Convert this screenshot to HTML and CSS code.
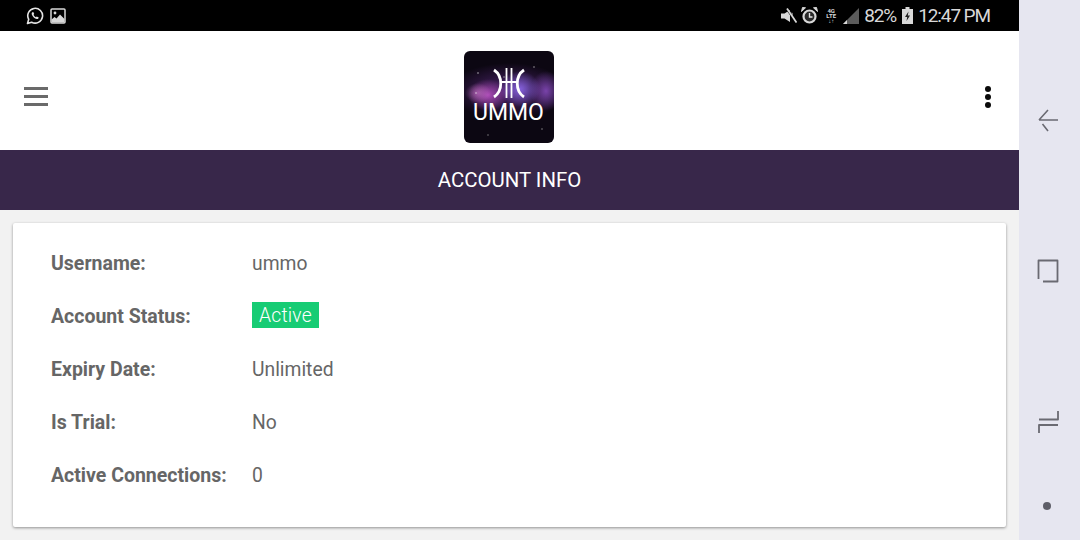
FILE: index.html
```html
<!DOCTYPE html>
<html lang="en">
<head>
	<meta charset="UTF-8">
	<title>Account Info</title>
	<link rel="stylesheet" href="styles.css">
</head>
<body>
	<div class="screen">
		<div class="app">
			<div class="statusBar">
				<div class="statusLeft">
					<svg class="icon" width="18" height="18" viewBox="0 0 18 18" fill="none" stroke="#e4e4e4">
						<path d="M1.5 16.5l1.2-4.2A7.4 7.4 0 1 1 5.6 15.2z" stroke-width="1.6" stroke-linejoin="round"/>
						<path d="M6.3 5.2c-1 .9-.8 2.4.5 4.1 1.4 1.8 3 2.9 4.4 2.7.9-.1 1.5-.8 1.5-1.6l-2-1-.8.8c-1-.4-1.9-1.3-2.4-2.4l.7-.8-.9-2z" fill="#e4e4e4" stroke="none"/>
					</svg>
					<svg class="icon" width="16" height="16" viewBox="0 0 16 16">
						<rect x="1" y="1" width="14" height="14" rx="1" fill="none" stroke="#d8d8d8" stroke-width="1.5"/>
						<circle cx="5" cy="5" r="1.4" fill="#d8d8d8"/>
						<path d="M1.5 14.5v-3l3-2.5 2 1.5 3.5-4 4.500 4.500v3.500z" fill="#d8d8d8"/>
					</svg>
				</div>
				<div class="statusRight">
					<svg class="icon" width="16" height="18" viewBox="0 0 16 18" fill="#d8d8d8">
						<path d="M0 6.500h3.500L9 3v12l-5.500-3.500H0z"/>
						<path d="M7 2l9 13v1h-1.500L6 4z" fill="#000"/>
						<path d="M6 1.500L15.500 15.500" stroke="#d8d8d8" stroke-width="1.800"/>
						<path d="M10.500 5.500L11.500 6v4z"/>
					</svg>
					<svg class="icon alarm" width="17" height="17" viewBox="0 0 17 17">
						<circle cx="8.500" cy="9.500" r="6" fill="#2a2a2a" stroke="#d8d8d8" stroke-width="2.200"/>
						<path d="M8.500 6v4h3" fill="none" stroke="#e4e4e4" stroke-width="1.400"/>
						<path d="M.5 4.500L4.500.8 1.500.5zM16.500 4.500L12.500.8l3-.3z" fill="#d8d8d8" stroke="#d8d8d8"/>
					</svg>
					<div class="netType">
						<span>4G</span>
						<span>LTE</span>
						<span>↓↑</span>
					</div>
					<svg class="icon signal" width="16" height="16" viewBox="0 0 16 16">
						<path d="M0 16L16 0v16z" fill="#5c5c5c"/>
						<path d="M0 16l4-4v4z" fill="#d8d8d8"/>
					</svg>
					<span class="statusText percent">82%</span>
					<svg class="icon battery" width="11" height="17" viewBox="0 0 11 17">
						<path d="M3.500 0h4v2H11v15H0V2h3.500z" fill="#d8d8d8"/>
						<path d="M6.500 4.500L3 10h2.200l-.7 4L8 8.500H5.800z" fill="#222"/>
					</svg>
					<span class="statusText clock">12:47 PM</span>
				</div>
			</div>

			<div class="header">
				<div class="hamburger">
					<span></span>
					<span></span>
					<span></span>
				</div>
				<div class="logo">
					<svg class="logoMark" width="36" height="32" viewBox="0 0 36 32" fill="none" stroke="#fff" stroke-width="2.800">
						<path d="M3 3c9 6 9 21 0 27"/>
						<path d="M33 3c-9 6-9 21 0 27"/>
						<path d="M15.500 1v30M20.500 1v30M10 15h16" stroke-width="1.800"/>
					</svg>
					<span class="logoText">UMMO</span>
				</div>
				<div class="dots">
					<span></span>
					<span></span>
					<span></span>
				</div>
			</div>

			<div class="titleBar">ACCOUNT INFO</div>

			<div class="content">
				<div class="card">
					<div class="row">
						<div class="label">Username:</div>
						<div class="value">ummo</div>
					</div>
					<div class="row">
						<div class="label">Account Status:</div>
						<div class="value"><span class="badge">Active</span></div>
					</div>
					<div class="row">
						<div class="label">Expiry Date:</div>
						<div class="value">Unlimited</div>
					</div>
					<div class="row">
						<div class="label">Is Trial:</div>
						<div class="value">No</div>
					</div>
					<div class="row">
						<div class="label">Active Connections:</div>
						<div class="value">0</div>
					</div>
				</div>
			</div>
		</div>

		<div class="navBar">
			<svg width="24" height="26" viewBox="0 0 24 26" fill="none" stroke="#6a6a72" stroke-width="1.600">
				<path d="M22 13H3M12 3l-9 10M6.500 17l5.500 7"/>
			</svg>
			<svg width="22" height="24" viewBox="0 0 22 24" fill="none" stroke="#6a6a72" stroke-width="1.800" stroke-linejoin="round">
				<path d="M1.500 20V1.500h19v21H6"/>
			</svg>
			<svg width="22" height="24" viewBox="0 0 22 24" fill="none" stroke="#6a6a72" stroke-width="1.800" stroke-linejoin="round">
				<path d="M21 1v8.500H2M2 23v-8h19"/>
			</svg>
			<span class="navDot"></span>
		</div>
	</div>
</body>
</html>
```
FILE: styles.css
```css
*{
	margin: 0;
	padding: 0;
	box-sizing: border-box;
}
body{
	width: 1080px;
	height: 540px;
	overflow: hidden;
	font-family: Roboto, "Liberation Sans", sans-serif;
}
.screen{
	display: flex;
	height: 540px;
}
.app{
	display: flex;
	flex-direction: column;
	width: 1019px;
	background: #f2f2f2;
}
.icon{
	display: block;
}
.statusBar{
	display: flex;
	justify-content: space-between;
	align-items: center;
	height: 31px;
	padding: 0 29px 0 26px;
	background: #000;
}
.statusLeft,.statusRight{
	display: flex;
	align-items: center;
}
.statusLeft{
	gap: 6px;
}
.statusRight .alarm{
	margin-left: 4px;
}
.netType{
	display: flex;
	flex-direction: column;
	align-items: center;
	width: 10px;
	margin-left: 8px;
	font-size: 6px;
	line-height: 5px;
	font-weight: 700;
	color: #d8d8d8;
}
.signal{
	margin-left: 7px;
}
.statusText{
	font-size: 19px;
	letter-spacing: -1.1px;
	color: #d8d8d8;
}
.percent{
	margin-left: 5px;
}
.battery{
	margin-left: 6px;
}
.clock{
	margin-left: 5px;
}
.header{
	display: grid;
	grid-template-columns: 1fr auto 1fr;
	align-items: center;
	height: 119px;
	padding: 13px 26px 0 24px;
	background: #fff;
}
.hamburger{
	display: flex;
	flex-direction: column;
	gap: 5px;
	width: 24px;
	margin-bottom: 2px;
}
.hamburger span{
	height: 3px;
	background: #6a6a6a;
}
.logo{
	display: flex;
	flex-direction: column;
	align-items: center;
	width: 90px;
	height: 92px;
	padding-top: 16px;
	border-radius: 6px;
	background:
		radial-gradient(circle 1px at 14px 22px, #fff, transparent),
		radial-gradient(circle 1px at 70px 16px, #ddd, transparent),
		radial-gradient(circle 1px at 12px 42px, #fff, transparent),
		radial-gradient(circle 1px at 40px 26px, #ccc, transparent),
		radial-gradient(circle 1px at 78px 78px, #bbb, transparent),
		radial-gradient(circle 1px at 24px 84px, #aaa, transparent),
		radial-gradient(ellipse 13px 10px at 14px 42px, rgba(190,110,190,.7), transparent),
		radial-gradient(ellipse 20px 16px at 24px 44px, rgba(185,80,195,.9), transparent),
		radial-gradient(ellipse 20px 18px at 56px 38px, rgba(135,100,225,.95), transparent),
		radial-gradient(ellipse 16px 20px at 82px 40px, rgba(135,75,190,.85), transparent),
		radial-gradient(ellipse 60px 28px at 45px 40px, rgba(85,40,120,.9), transparent),
		#0c0712;
}
.logoMark{
	display: block;
}
.logoText{
	font-size: 23px;
	line-height: 28px;
	color: #fff;
}
.dots{
	display: flex;
	flex-direction: column;
	justify-self: end;
	gap: 2px;
	width: 6px;
	margin-right: 2px;
}
.dots span{
	height: 6px;
	border-radius: 50%;
	background: #0a0a0a;
}
.titleBar{
	height: 60px;
	line-height: 61px;
	text-align: center;
	font-size: 20.4px;
	color: #fff;
	background: #38274a;
}
.content{
	flex: 1;
	padding: 13px;
}
.card{
	height: 304px;
	padding: 14px 38px;
	background: #fff;
	border-radius: 2px;
	box-shadow: 0 1px 3px rgba(0,0,0,.4);
}
.row{
	display: flex;
	align-items: center;
	height: 53px;
	font-size: 19.3px;
	color: #666;
}
.label{
	width: 201px;
	font-size: 19.5px;
	font-weight: 700;
}
.value{
	display: flex;
}
.badge{
	height: 26px;
	margin-top: -4px;
	padding: 0 7px;
	line-height: 28px;
	letter-spacing: .2px;
	color: #fff;
	font-weight: 300;
	background: #17cc74;
}
.navBar{
	display: flex;
	flex-direction: column;
	align-items: center;
	width: 61px;
	padding: 107px 3px 0 0;
	background: #e6e6f0;
}
.navBar svg{
	display: block;
}
.navBar svg + svg{
	margin-top: 126px;
}
.navBar svg + svg + svg{
	margin-top: 127px;
}
.navDot{
	width: 8px;
	height: 8px;
	margin: 68px 2px 0 0;
	border-radius: 50%;
	background: #5e5e68;
}
```
